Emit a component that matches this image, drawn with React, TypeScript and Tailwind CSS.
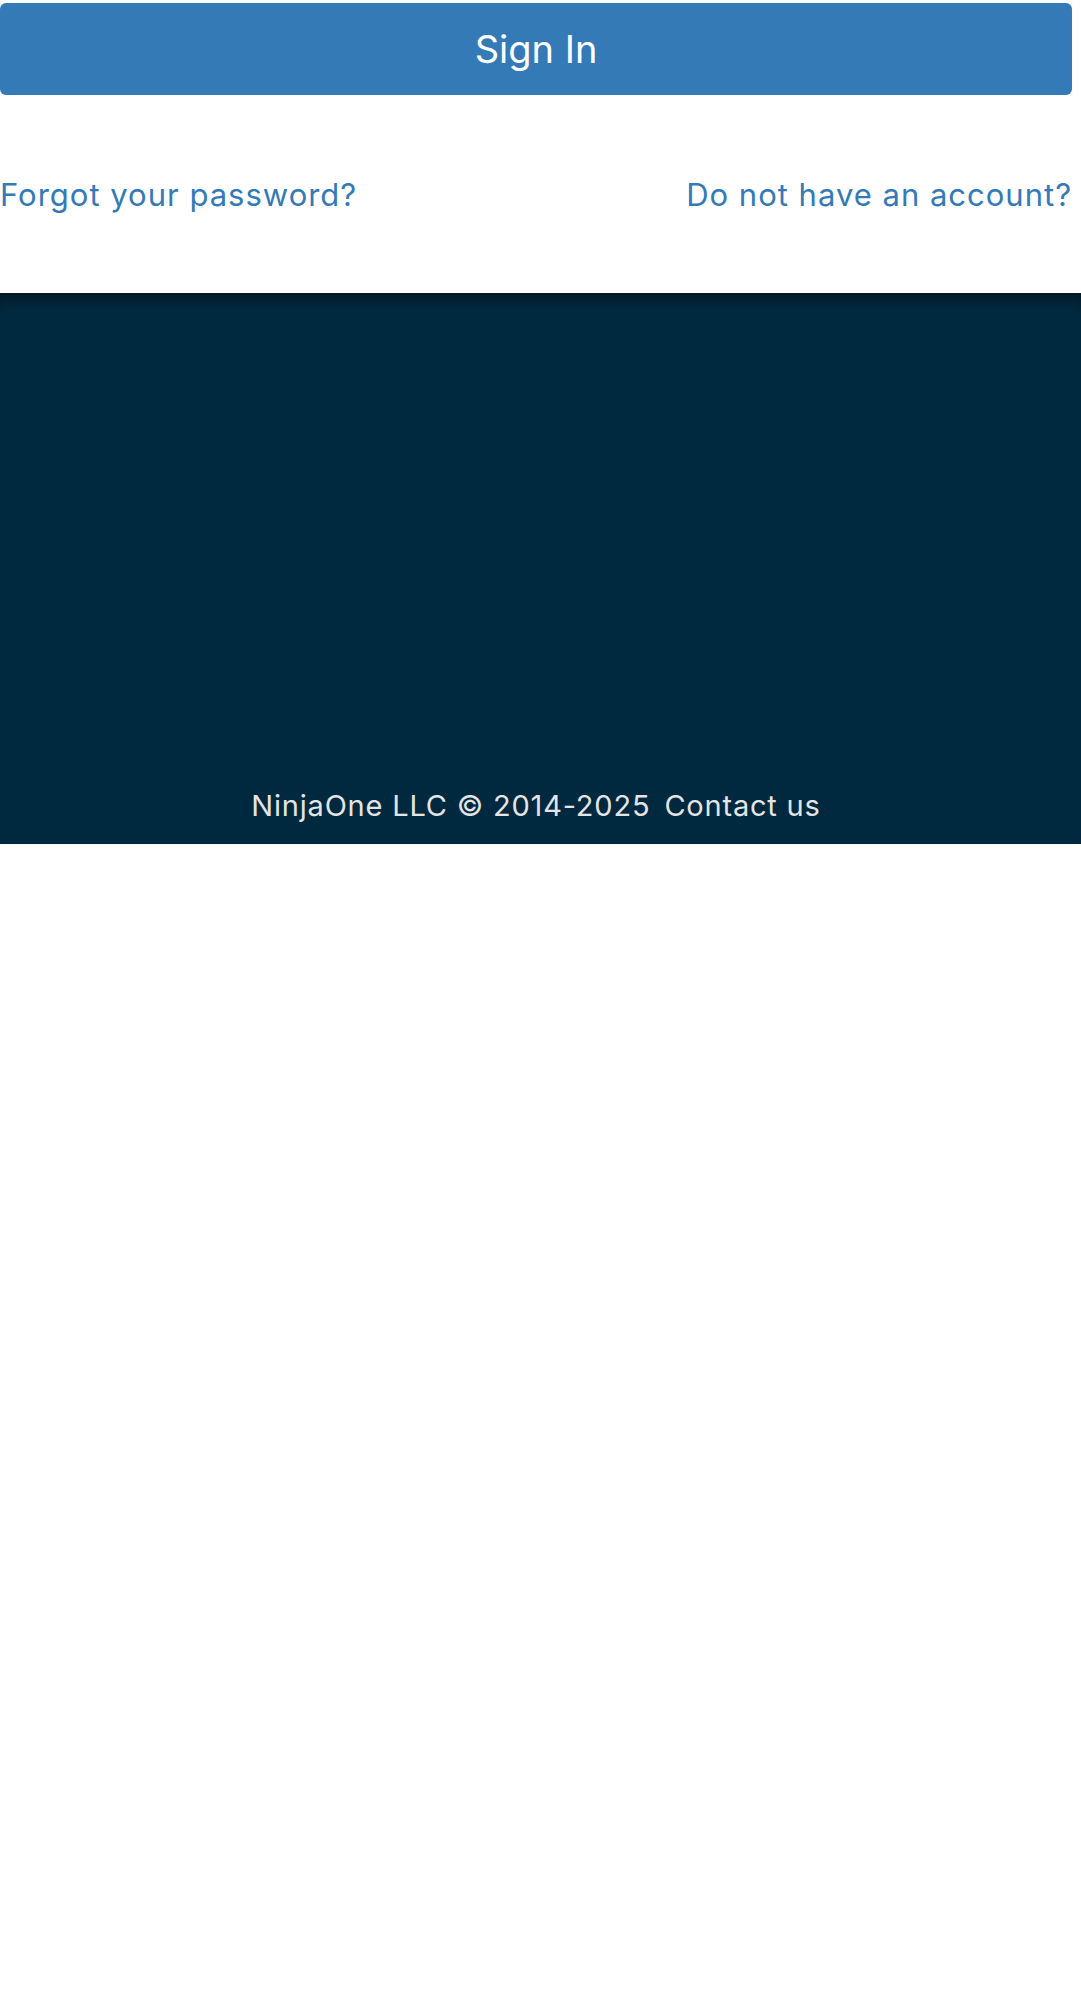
export default function App() {
  return (
    <div className="w-[1081px] min-h-[1999px] bg-white font-['Inter','Noto_Sans',sans-serif]">
      <div className="pr-[9px] pt-[3px]">
        <button className="flex h-[92px] w-full items-center justify-center rounded-[6px] bg-[#337ab7] text-[38px] font-normal text-white">
          Sign In
        </button>
        <div className="flex h-[198px] items-center justify-between text-[31px] tracking-[1px] text-[#337ab7]">
          <a href="#" className="leading-none">Forgot your password?</a>
          <a href="#" className="leading-none">Do not have an account?</a>
        </div>
      </div>
      <footer className="flex h-[551px] flex-col items-center justify-end bg-[#00293f] pb-[20px] pr-[9px] shadow-[inset_0_14px_14px_-8px_rgba(0,0,0,0.45)]">
        <div className="flex items-center gap-[14px] text-[29px] leading-[36px] tracking-[0.8px] text-[#e4e4e4]">
          <span>NinjaOne LLC © 2014-2025</span>
          <a href="#">Contact us</a>
        </div>
      </footer>
    </div>
  );
}
